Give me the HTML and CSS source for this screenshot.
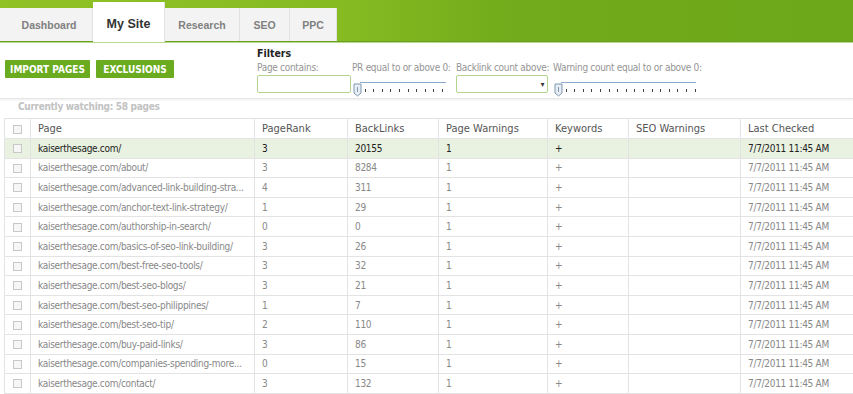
FILE: index.html
```html
<!DOCTYPE html>
<html lang="en">
<head>
  <meta charset="UTF-8">
  <title>My Site</title>
  <link rel="stylesheet" href="styles.css">
</head>
<body>
  <header class="topbar">
    <nav class="tabs">
      <a class="tab tab-dash">Dashboard</a>
      <a class="tab tab-active">My Site</a>
      <a class="tab tab-research">Research</a>
      <a class="tab tab-seo">SEO</a>
      <a class="tab tab-ppc">PPC</a>
    </nav>
  </header>

  <div class="toolbar">
    <div class="actions">
      <button class="btn btn-import">IMPORT PAGES</button>
      <button class="btn btn-excl">EXCLUSIONS</button>
    </div>
    <div class="filters">
      <div class="filters-title">Filters</div>
      <div class="filter-row">
        <div class="filter f-page">
          <label>Page contains:</label>
          <input type="text" class="text-input">
        </div>
        <div class="filter f-pr">
          <label>PR equal to or above 0:</label>
          <div class="slider slider-pr">
            <span class="thumb"><svg width="9" height="14" viewBox="0 0 9 14"><path d="M1 1h7v9l-3.5 3l-3.5-3z" fill="#e8eef4" stroke="#7d98b3"/><path d="M4.5 4v5" stroke="#7d98b3"/></svg></span>
            <span class="track"></span>
            <span class="ticks"></span>
          </div>
        </div>
        <div class="filter f-back">
          <label>Backlink count above:</label>
          <div class="select-box"><span class="caret">▾</span></div>
        </div>
        <div class="filter f-warn">
          <label>Warning count equal to or above 0:</label>
          <div class="slider slider-warn">
            <span class="thumb"><svg width="9" height="14" viewBox="0 0 9 14"><path d="M1 1h7v9l-3.5 3l-3.5-3z" fill="#e8eef4" stroke="#7d98b3"/><path d="M4.5 4v5" stroke="#7d98b3"/></svg></span>
            <span class="track"></span>
            <span class="ticks"></span>
          </div>
        </div>
      </div>
    </div>
  </div>

  <div class="watching">Currently watching: 58 pages</div>

  <table class="pages">
    <colgroup>
      <col style="width:26px"><col style="width:224px"><col style="width:93px"><col style="width:91px">
      <col style="width:109px"><col style="width:81px"><col style="width:112px"><col style="width:113px">
    </colgroup>
    <thead>
      <tr>
        <th class="cb"><span class="box"></span></th>
        <th>Page</th><th>PageRank</th><th>BackLinks</th><th>Page Warnings</th>
        <th>Keywords</th><th>SEO Warnings</th><th>Last Checked</th>
      </tr>
    </thead>
    <tbody id="rows"></tbody>
  </table>

  <script>
    const rows = [
      ["kaiserthesage.com/", 3, 20155],
      ["kaiserthesage.com/about/", 3, 8284],
      ["kaiserthesage.com/advanced-link-building-stra...", 4, 311],
      ["kaiserthesage.com/anchor-text-link-strategy/", 1, 29],
      ["kaiserthesage.com/authorship-in-search/", 0, 0],
      ["kaiserthesage.com/basics-of-seo-link-building/", 3, 26],
      ["kaiserthesage.com/best-free-seo-tools/", 3, 32],
      ["kaiserthesage.com/best-seo-blogs/", 3, 21],
      ["kaiserthesage.com/best-seo-philippines/", 1, 7],
      ["kaiserthesage.com/best-seo-tip/", 2, 110],
      ["kaiserthesage.com/buy-paid-links/", 3, 86],
      ["kaiserthesage.com/companies-spending-more...", 0, 15],
      ["kaiserthesage.com/contact/", 3, 132]
    ];
    const body = document.getElementById("rows");
    rows.forEach((r, i) => {
      body.innerHTML += `<tr class="${i === 0 ? 'selected' : ''}">
        <td class="cb"><span class="box"></span></td>
        <td>${r[0]}</td><td>${r[1]}</td><td>${r[2]}</td><td>1</td>
        <td>+</td><td></td><td>7/7/2011 11:45 AM</td>
      </tr>`;
    });
  </script>
</body>
</html>
```

FILE: styles.css
```css
body {
  margin: 0;
  font-family: 'DejaVu Sans Condensed', 'DejaVu Sans', sans-serif;
  font-size: 10px;
  letter-spacing: -0.3px;
  color: #888;
  background: #fff;
}

.topbar {
  height: 41px;
  background: linear-gradient(to right, #90c226 0%, #86bb22 40%, #72ab1b 60%, #6ca81a 100%);
  border-bottom: 1px solid #5f9914;
  box-shadow: 0 1px 0 #b9d98c;
}

.tabs {
  display: flex;
  align-items: flex-end;
  height: 41px;
}

.tab {
  display: flex;
  align-items: center;
  justify-content: center;
  height: 33px;
  box-sizing: border-box;
  background: #f3f3f3;
  border-right: 1px solid #e2e2e2;
  font-family: 'Liberation Sans', Arial, sans-serif;
  font-weight: bold;
  font-size: 10.5px;
  letter-spacing: 0;
  color: #808080;
}

.tab-dash { width: 93px; padding-left: 6px; }
.tab-research { width: 75px; }
.tab-seo { width: 50px; }
.tab-ppc { width: 47px; }

.tab-active {
  width: 72px;
  height: 40px;
  background: #fff;
  color: #333;
  font-size: 12.5px;
  padding-top: 4px;
  position: relative;
  top: 1px;
}

.toolbar {
  display: flex;
  height: 56px;
  border-bottom: 1px solid #e6e6e6;
  box-shadow: 0 1px 2px #eee;
}

.actions {
  display: flex;
  gap: 6px;
  padding: 18px 0 0 5px;
  width: 252px;
}

.btn {
  height: 18px;
  margin: 0;
  padding: 0;
  border: none;
  border-radius: 1px;
  background: #6aab1f;
  color: #fff;
  font-family: 'DejaVu Sans Condensed', 'DejaVu Sans', sans-serif;
  font-weight: bold;
  font-size: 10px;
  letter-spacing: 0;
}

.btn-import { width: 85px; }
.btn-excl { width: 78px; }

.filters-title {
  margin-top: 5px;
  font-weight: bold;
  font-size: 10.5px;
  letter-spacing: 0;
  color: #222;
  height: 14px;
}

.filter-row {
  display: flex;
}

.filter label {
  display: block;
  white-space: nowrap;
  color: #959595;
  height: 14px;
  line-height: 14px;
}

.f-page { width: 95px; }
.f-pr { width: 104px; }
.f-back { width: 97px; }
.f-warn { width: 150px; }

.text-input, .select-box {
  box-sizing: border-box;
  height: 18px;
  border: 1px solid #b4d68c;
  border-radius: 2px;
  margin: 0;
  padding: 0;
}

.text-input { width: 94px; }

.select-box {
  width: 92px;
  display: flex;
  justify-content: flex-end;
  align-items: center;
}

.caret {
  color: #333;
  font-size: 8px;
  margin-right: 3px;
}

.slider {
  position: relative;
  height: 22px;
}

.slider-pr { width: 94px; }
.slider-warn { width: 143px; }

.thumb {
  position: absolute;
  left: 1px;
  top: 1px;
}

.track {
  display: block;
  margin: 7px 0 0 8px;
  height: 1px;
  background: #8aaacb;
}

.ticks {
  display: block;
  margin: 6px 0 0 4px;
  height: 3px;
  background: repeating-linear-gradient(to right, #444 0, #444 1px, transparent 1px, transparent 8.6px);
}

.watching {
  height: 19px;
  line-height: 16px;
  padding-left: 18px;
  color: #c2c2c2;
  font-weight: bold;
}

.pages {
  border-collapse: collapse;
  table-layout: fixed;
  width: 849px;
  margin-left: 4px;
}

.pages th, .pages td {
  border: 1px solid #e3e3e3;
  padding: 0 0 0 7px;
  text-align: left;
  white-space: nowrap;
  overflow: hidden;
}

.pages th {
  height: 19px;
  font-weight: normal;
  font-size: 11px;
  letter-spacing: 0;
  color: #555;
  background: #fff;
}

.pages td {
  height: 18.6px;
}

.pages tr.selected td {
  background: #e9f2e0;
  color: #222;
}

.pages .cb {
  padding: 0;
  text-align: center;
}

.box {
  display: inline-block;
  width: 7px;
  height: 7px;
  border: 1px solid #c8c8c8;
  background: #f6f6f6;
  vertical-align: middle;
}
```
